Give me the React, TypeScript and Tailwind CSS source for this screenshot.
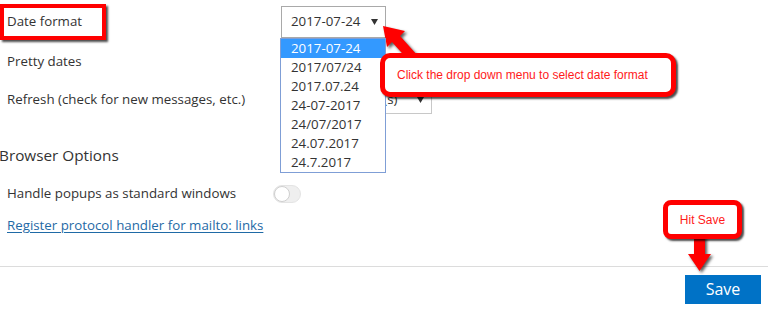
const dateFormats = ['2017-07-24', '2017/07/24', '2017.07.24', '24-07-2017', '24/07/2017', '24.07.2017', '24.7.2017'];

function Caret() {
  return (
    <svg className="w-[7px] h-[6px]" viewBox="0 0 7 6" fill="#333">
      <path d="M0 0h7L3.5 6z" />
    </svg>
  );
}

function Arrows() {
  return (
    <svg
      className="absolute inset-0 pointer-events-none drop-shadow-[2px_2px_1.5px_rgba(0,0,0,0.65)]"
      width="768"
      height="309"
      viewBox="0 0 768 309"
    >
      {/* callout arrow pointing at the select caret */}
      <path d="M383 26 L405 31 L400 36 L418 56 L410 62 L392 42 L387 47 Z" fill="#ff0000" />
      {/* arrow pointing down at the save button */}
      <path d="M694 236 H705 V254 H711 L699.5 271 L688 254 H694 Z" fill="#ff0000" />
    </svg>
  );
}

export default function App() {
  return (
    <div
      className="relative w-[768px] h-[309px] overflow-hidden bg-white text-[13.3px] text-[#333]"
      style={{ fontFamily: '"Open Sans", "Noto Sans", sans-serif' }}
    >
      <div className="pl-[7px] pt-[6px]">
        <div className="flex flex-col gap-[7px]">
          <div className="flex h-[32px] items-center">
            <span className="w-[274px]">Date format</span>
            <div className="relative">
              <div className="flex w-[105px] h-[32px] items-center justify-between border border-[#a9a9a9] pl-[9px] pr-[7px]">
                <span>2017-07-24</span>
                <Caret />
              </div>
              <ul className="absolute left-[-1px] top-full z-10 w-[106px] border border-[#7f9ed6] bg-white">
                {dateFormats.map((f, i) => (
                  <li
                    key={f}
                    className={`flex h-[19px] items-center pl-[10px] ${i === 0 ? 'bg-[#3399ff] text-white' : ''}`}
                  >
                    {f}
                  </li>
                ))}
              </ul>
            </div>
          </div>
          <div className="flex h-[32px] items-center pt-[2px]">
            <span className="w-[274px]">Pretty dates</span>
          </div>
          <div className="flex h-[32px] items-center">
            <span className="w-[274px]">Refresh (check for new messages, etc.)</span>
            <div className="flex w-[151px] h-[28px] items-center justify-between border border-[#c8c8c8] pl-[9px] pr-[7px]">
              <span>Every 1 minute(s)</span>
              <Caret />
            </div>
          </div>
        </div>

        <h2 className="ml-[-8px] mt-[29px] text-[15.3px] leading-[20px] text-[#333]">Browser Options</h2>

        <div className="mt-[19px] flex h-[20px] items-center">
          <span className="w-[266px]">Handle popups as standard windows</span>
          <div className="flex w-[28px] h-[18px] items-center rounded-full border border-[#e4e4e4] bg-[#efefef]">
            <span className="h-[16px] w-[16px] rounded-full border border-[#cfcfcf] bg-white" />
          </div>
        </div>

        <a className="mt-[12px] block text-[#1f6aa6] underline underline-offset-2 decoration-1" href="#">
          Register protocol handler for mailto: links
        </a>
      </div>

      <div className="mt-[30px] border-t border-[#dcdcdc]" />

      <div className="flex justify-end pr-[7px] pt-[8px]">
        <button className="h-[29px] w-[76px] bg-[#0072c6] text-[16px] font-medium text-white">Save</button>
      </div>

      {/* annotations */}
      <div className="absolute left-0 top-[4px] h-[36px] w-[106px] border-[4px] border-[#ff0000] shadow-[2px_2px_2px_rgba(0,0,0,0.7)]" />

      <Arrows />

      <div
        className="absolute left-[380px] top-[53px] z-20 flex h-[44px] w-[296px] items-center rounded-[10px] border-[5px] border-[#ff0000] bg-white pl-[12px] text-[12px] text-[#ff1a1a] shadow-[2px_2px_2px_rgba(0,0,0,0.7)]"
        style={{ fontFamily: '"Liberation Sans", Arial, sans-serif' }}
      >
        Click the drop down menu to select date format
      </div>

      <div
        className="absolute left-[663px] top-[200px] z-20 flex h-[39px] w-[79px] items-center justify-center rounded-[8px] border-[5px] border-[#ff0000] bg-white text-[12px] text-[#ff1a1a] shadow-[2px_2px_2px_rgba(0,0,0,0.7)]"
        style={{ fontFamily: '"Liberation Sans", Arial, sans-serif' }}
      >
        Hit Save
      </div>
    </div>
  );
}
